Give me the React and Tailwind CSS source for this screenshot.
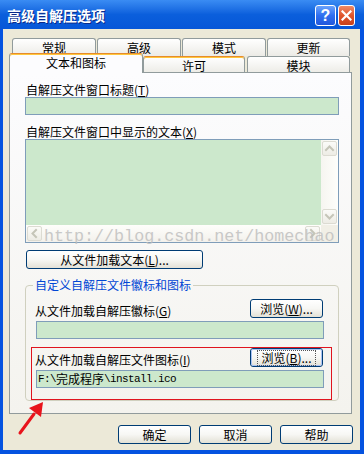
import React from "react";

function XPButton({ children, className = "", focused = false }) {
  return (
    <div
      className={`flex items-center justify-center rounded-[3px] border border-[#003c74] bg-gradient-to-b from-white via-[#f7f7f4] to-[#e3e1d6] text-[12px] leading-none text-black ${className}`}
    >
      {focused ? (
        <div className="w-full h-full rounded-[2px] border border-[#a9c2f4] flex items-center justify-center">
          <span className="outline outline-1 outline-dotted outline-[#555] px-[3px] py-[1px] leading-[12px]">
            {children}
          </span>
        </div>
      ) : (
        <span className="leading-[12px]">{children}</span>
      )}
    </div>
  );
}

function Arrow({ dir }) {
  const paths = {
    up: "M2 6 L5.5 2.5 L9 6",
    down: "M2 3 L5.5 6.5 L9 3",
    left: "M6 2 L2.5 5.5 L6 9",
    right: "M3 2 L6.5 5.5 L3 9",
  };
  const size = dir === "up" || dir === "down" ? { w: 11, h: 9 } : { w: 9, h: 11 };
  return (
    <svg width={size.w} height={size.h} viewBox={`0 0 ${size.w} ${size.h}`}>
      <path d={paths[dir]} fill="none" stroke="#c5c5b8" strokeWidth="2" strokeLinecap="square" />
    </svg>
  );
}

function ScrollBtn({ dir }) {
  return (
    <div className="w-[15px] h-[15px] m-[1px] rounded-[2px] border border-[#dcdbd2] bg-gradient-to-b from-[#fbfbf8] to-[#edece5] flex items-center justify-center shrink-0">
      <Arrow dir={dir} />
    </div>
  );
}

function Tab({ children, className = "", active = false, hot = false }) {
  const top = active || hot ? "border-t-[#e68b2c] shadow-[inset_0_1px_0_#ffc73c]" : "";
  const bg = active ? "bg-[#fcfcfe]" : "bg-gradient-to-b from-white to-[#ecebe6]";
  return (
    <div
      className={`rounded-t-[3px] border border-b-0 border-[#919b9c] ${top} ${bg} flex justify-center text-[12px] leading-[13px] ${className}`}
    >
      {children}
    </div>
  );
}

function GreenInput({ children, className = "" }) {
  return (
    <div className={`h-[18px] border border-[#7f9db9] bg-[#cce8cc] flex items-center ${className}`}>
      {children}
    </div>
  );
}

export default function App() {
  return (
    <div className="w-[364px] h-[454px] overflow-hidden flex flex-col relative font-['Noto_Sans_CJK_SC','Noto_Sans',sans-serif] text-[12px] text-black">
      {/* Title bar */}
      <div className="h-[29px] shrink-0 flex items-center bg-gradient-to-b from-[#3a8cf3] via-[#0b5fdc] to-[#0656d8] pl-[7px]">
        <span className="text-white font-bold text-[14px] leading-none [text-shadow:1px_1px_0_#0a2a8a]">
          高级自解压选项
        </span>
        <div className="ml-auto mr-[9px] self-start mt-[5px] flex gap-[2px]">
          <div className="w-[21px] h-[21px] rounded-[3px] border border-white bg-gradient-to-b from-[#6aa2fb] via-[#2f6ff0] to-[#2158dc] flex items-center justify-center">
            <span className="text-white font-bold text-[16px] leading-none font-['Liberation_Sans',sans-serif]">?</span>
          </div>
          <div className="w-[17px] h-[21px] rounded-[3px] border border-white bg-gradient-to-b from-[#ee8a66] via-[#e0552c] to-[#c6401a] flex items-center justify-center">
            <svg width="11" height="11" viewBox="0 0 11 11">
              <path d="M1.5 1.5 L9.5 9.5 M9.5 1.5 L1.5 9.5" stroke="white" strokeWidth="2.2" strokeLinecap="square" />
            </svg>
          </div>
        </div>
      </div>

      {/* Body */}
      <div className="flex-1 flex flex-col bg-[#ece9d8] border-l-[3px] border-r-[4px] border-b-[4px] border-[#0553e0] pt-[9px] pl-[6px]">
        {/* Tab control */}
        <div className="w-[343px] flex flex-col">
          <div className="flex h-[18px] pl-[3px] gap-[1px]">
            <Tab className="w-[84px] h-[18px] pt-[2px]">常规</Tab>
            <Tab className="w-[84px] h-[18px] pt-[2px]">高级</Tab>
            <Tab className="w-[84px] h-[18px] pt-[2px]">模式</Tab>
            <Tab className="w-[83px] h-[18px] pt-[2px]">更新</Tab>
          </div>
          <div className="flex items-end h-[20px] -mt-[3px]">
            <Tab active className="relative z-10 w-[134px] h-[20px] pt-[2px]">文本和图标</Tab>
            <Tab hot className="w-[102px] h-[17px] pt-[2px]">许可</Tab>
            <Tab className="w-[103px] h-[17px] pt-[2px] ml-[2px]">模块</Tab>
          </div>

          {/* Panel */}
          <div className="-mt-[1px] h-[342px] border border-[#919b9c] bg-gradient-to-b from-[#fcfcfe] to-[#f4f3ee] pl-[15px] pr-[12px] pt-[10px] flex flex-col">
            <div className="h-[14px] leading-[14px] pl-[1px]">
              自解压文件窗口标题(<u>T</u>)
            </div>
            <GreenInput />

            <div className="mt-[10px] h-[14px] leading-[14px] pl-[1px]">
              自解压文件窗口中显示的文本(<u>X</u>)
            </div>
            <div className="relative h-[104px] border border-[#7f9db9] flex flex-col">
              <div className="flex flex-1">
                <div className="flex-1 bg-[#cce8cc]" />
                <div className="w-[17px] flex flex-col bg-gradient-to-r from-[#f6f5f0] to-[#fefefb]">
                  <ScrollBtn dir="up" />
                  <div className="flex-1" />
                  <ScrollBtn dir="down" />
                </div>
              </div>
              <div className="h-[17px] flex">
                <div className="flex-1 flex bg-gradient-to-b from-[#fefefb] to-[#f3f1ec]">
                  <ScrollBtn dir="left" />
                  <div className="flex-1" />
                  <ScrollBtn dir="right" />
                </div>
                <div className="w-[17px] bg-[#f1efe6]" />
              </div>
              <div className="absolute left-[18px] top-[89px] whitespace-nowrap font-['Liberation_Mono',monospace] text-[16.7px] leading-none text-[#bdbdbd] opacity-80 pointer-events-none">
                http://blog.csdn.net/homechao
              </div>
            </div>

            <XPButton className="mt-[7px] ml-[1px] w-[177px] h-[19px]">
              从文件加载文本(<u>L</u>)...
            </XPButton>

            <fieldset className="mt-[9px] border border-[#d0d0bf] rounded-[4px] flex flex-col">
              <legend className="ml-[7px] px-[2px] leading-[14px] text-[#0046d5]">
                自定义自解压文件徽标和图标
              </legend>
              <div className="pl-[10px] pr-[14px] flex flex-col">
                <div className="mt-[7px] h-[19px] flex items-end justify-between">
                  <span className="-ml-[1px] leading-[14px]">从文件加载自解压徽标(<u>G</u>)</span>
                  <XPButton className="w-[73px] h-[19px] mr-[1px] self-start">
                    浏览(<u>W</u>)...
                  </XPButton>
                </div>
                <GreenInput className="mt-[3px]" />
              </div>
              <div className="mt-[8px] ml-[5px] mr-[6px] border border-[#e0141e] pl-[4px] pr-[7px] pb-[11px] flex flex-col">
                <div className="h-[19px] flex items-end justify-between">
                  <span className="-ml-[1px] leading-[14px]">从文件加载自解压文件图标(<u>I</u>)</span>
                  <XPButton focused className="w-[73px] h-[19px] mr-[1px] self-start">
                    浏览(<u>B</u>)...
                  </XPButton>
                </div>
                <GreenInput className="mt-[3px] pl-[1px]">
                  <span className="font-['Liberation_Mono',monospace] text-[11px] tracking-[-0.6px] leading-none">F:\</span>
                  <span className="text-[12px] leading-none">完成程序</span>
                  <span className="font-['Liberation_Mono',monospace] text-[11px] tracking-[-0.6px] leading-none">\install.ico</span>
                </GreenInput>
              </div>
            </fieldset>
          </div>
        </div>

        {/* Bottom buttons */}
        <div className="mt-[11px] flex justify-end gap-[8px] mr-[7px]">
          <XPButton className="w-[73px] h-[19px]">确定</XPButton>
          <XPButton className="w-[73px] h-[19px]">取消</XPButton>
          <XPButton className="w-[73px] h-[19px]">帮助</XPButton>
        </div>
      </div>

      {/* Red annotation arrow */}
      <svg className="absolute left-0 top-0 pointer-events-none" width="364" height="454" viewBox="0 0 364 454">
        <path d="M20 433 L34 414" stroke="#e8141c" strokeWidth="3" strokeLinecap="round" />
        <path d="M43 402 L41 417 L29 408 Z" fill="#e8141c" />
      </svg>
    </div>
  );
}
